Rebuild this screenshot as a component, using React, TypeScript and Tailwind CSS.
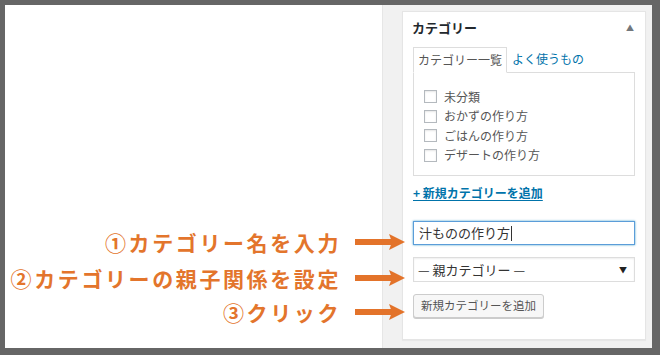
const jp = "font-['Noto_Sans_CJK_JP','Noto_Sans',sans-serif]";

const categories = ["未分類", "おかずの作り方", "ごはんの作り方", "デザートの作り方"];

const steps = [
  { label: "①カテゴリー名を入力", mb: "mb-[14px]" },
  { label: "②カテゴリーの親子関係を設定", mb: "mb-[12px]" },
  { label: "③クリック", mb: "mb-0" },
];

function Arrow() {
  return (
    <svg width="50" height="16" viewBox="0 0 50 16" className="shrink-0 ml-[14px] mr-[-23px]">
      <rect x="0" y="5" width="38" height="6" fill="#e3732a" />
      <path d="M34 0 L50 8 L34 16 L37 8 Z" fill="#e3732a" />
    </svg>
  );
}

export default function App() {
  return (
    <div className={`w-[660px] h-[355px] bg-[#666666] pt-[5px] pl-[5px] pr-[8px] pb-[7px] ${jp}`}>
      <div className="flex h-full bg-white">
        <div className="relative z-10 w-[377px] flex flex-col items-end pt-[226px]">
          {steps.map((s) => (
            <div key={s.label} className={`flex items-center h-[22px] whitespace-nowrap ${s.mb}`}>
              <span className="text-[21px] font-bold leading-none tracking-[2.6px] text-[#e3752c]">
                {s.label}
              </span>
              <Arrow />
            </div>
          ))}
        </div>

        <div className="flex-1 bg-[#f1f1f1] border-l border-[#e6e6e6] pl-[19px] pt-[6px] pr-[6px] pb-[8px]">
          <div className="h-full bg-white border border-[#e5e5e5] shadow-[0_1px_1px_rgba(0,0,0,0.04)]">
            <div className="flex items-center justify-between h-[30px] px-[9px] pt-[2px]">
              <span className="text-[13px] font-bold text-[#23282d]">カテゴリー</span>
              <span className="text-[8px] text-[#72777c] mr-[2px]">▲</span>
            </div>

            <div className="px-[10px] pt-[4px]">
              <div className="flex items-end">
                <div className="relative z-10 -mb-px border border-[#dddddd] border-b-white bg-white px-[4px] h-[26px] flex items-center text-[12px] text-[#555]">
                  カテゴリー一覧
                </div>
                <div className="px-[5px] h-[26px] flex items-center text-[12px] text-[#0073aa]">
                  よく使うもの
                </div>
              </div>

              <div className="border border-[#dddddd] h-[104px] pt-[14px] pl-[10px]">
                {categories.map((c) => (
                  <div key={c} className="flex items-center h-[19.5px]">
                    <span className="w-[13px] h-[13px] border border-[#b4b9be] bg-white shadow-[inset_0_1px_2px_rgba(0,0,0,0.1)]" />
                    <span className="ml-[7px] text-[12px] text-[#555]">{c}</span>
                  </div>
                ))}
              </div>

              <div className="mt-[8px] h-[18px] flex items-center">
                <span className="text-[12px] font-semibold text-[#0073aa] underline underline-offset-2">
                  + 新規カテゴリーを追加
                </span>
              </div>

              <div className="mt-[19px] h-[24px] border border-[#5b9dd9] shadow-[0_0_2px_rgba(30,140,190,0.8)] flex items-center px-[5px] text-[13px] text-[#333]">
                汁ものの作り方
                <span className="w-px h-[15px] bg-[#333] ml-px" />
              </div>

              <div className="mt-[12px] h-[25px] border border-[#dddddd] shadow-[inset_0_1px_2px_rgba(0,0,0,0.07)] flex items-center justify-between px-[4px] text-[13px] text-[#333]">
                <span>— 親カテゴリー —</span>
                <span className="text-[8px] text-[#222] mr-[3px]">▼</span>
              </div>

              <div className="mt-[12px] flex">
                <div className="h-[24px] px-[7px] border border-[#cccccc] rounded-[3px] bg-[#f7f7f7] shadow-[0_1px_0_#cccccc] flex items-center text-[11.5px] text-[#555]">
                  新規カテゴリーを追加
                </div>
              </div>
            </div>
          </div>
        </div>
      </div>
    </div>
  );
}
